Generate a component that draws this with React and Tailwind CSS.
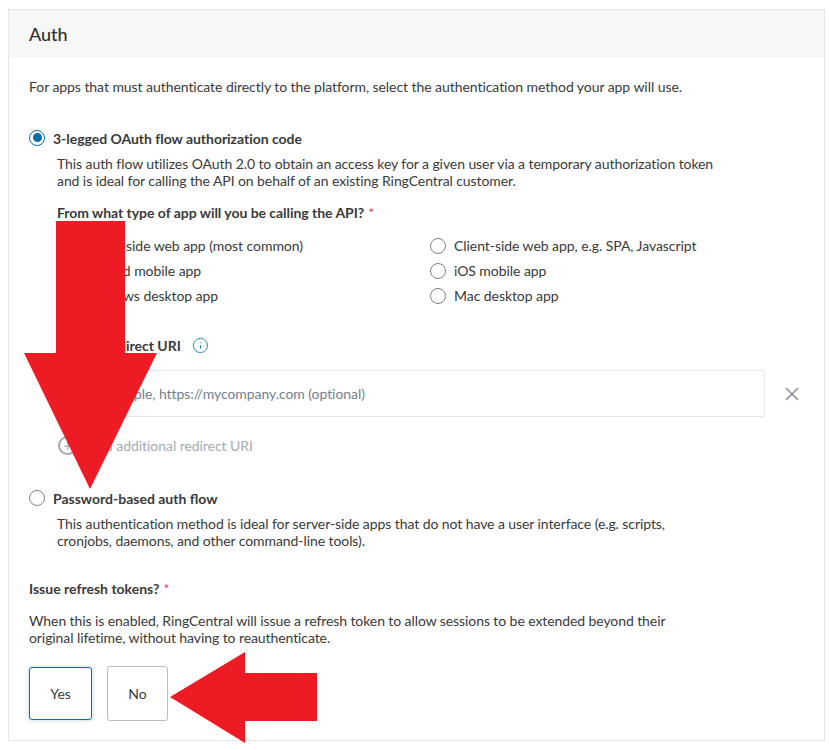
import { X, Info, Plus } from 'lucide-react'

const APP_TYPES = [
  { label: 'Server-side web app (most common)' },
  { label: 'Client-side web app, e.g. SPA, Javascript' },
  { label: 'Android mobile app' },
  { label: 'iOS mobile app' },
  { label: 'Windows desktop app' },
  { label: 'Mac desktop app' },
]

function Radio({ checked }) {
  return (
    <span
      className={`w-[16px] h-[16px] rounded-full flex items-center justify-center shrink-0 bg-white ${
        checked ? 'border-[1.5px] border-[#0b6ea8]' : 'border border-[#808080]'
      }`}
    >
      {checked && <span className="w-[9px] h-[9px] rounded-full bg-[#0b6ea8]" />}
    </span>
  )
}

function Required() {
  return <span className="text-[#d9455f] font-normal ml-1">*</span>
}

export default function App() {
  return (
    <div className="relative w-[829px] h-[750px] overflow-hidden bg-white font-['Lato',sans-serif] text-[14px] tracking-[-0.06px] text-[#3a3a3a]">
      <div className="ml-2 mt-[9px] w-[817px] h-[732px] border border-[#e6e6e6]">
        <div className="h-[48px] bg-[#f7f7f7] flex items-center px-5 text-[18px] font-medium text-[#2f2f2f]">
          Auth
        </div>

        <div className="px-5">
          <p className="mt-[20px] leading-[17px]">
            For apps that must authenticate directly to the platform, select the authentication method your app will use.
          </p>

          <div className="mt-[34px] flex items-center gap-[8px] h-[17px] font-bold tracking-[-0.03px]">
            <Radio checked />
            <span className="pt-px">3-legged OAuth flow authorization code</span>
          </div>

          <div className="ml-7">
            <p className="mt-[9px] leading-[17px] w-[680px] tracking-[-0.08px]">
              This auth flow utilizes OAuth 2.0 to obtain an access key for a given user via a temporary authorization token
              and is ideal for calling the API on behalf of an existing RingCentral customer.
            </p>

            <div className="mt-[15px] h-[17px] leading-[17px] font-bold tracking-[-0.04px]">
              From what type of app will you be calling the API?
              <Required />
            </div>

            <div className="mt-[16px] grid grid-cols-[372px_372px] gap-y-2">
              {APP_TYPES.map((t) => (
                <div key={t.label} className="flex items-center gap-[8px] h-[17px]">
                  <span className="pl-px">
                    <Radio />
                  </span>
                  <span>{t.label}</span>
                </div>
              ))}
            </div>

            <div className="mt-[33px] flex items-center h-[17px] font-bold tracking-normal">
              OAuth Redirect URI
              <Info className="w-[17px] h-[17px] ml-[11px] text-[#2f86c1]" strokeWidth={1.4} />
            </div>

            <div className="mt-[16px] flex items-center">
              <div className="w-[708px] h-[47px] border border-[#e6e6e6] rounded-[2px] flex items-center px-[20px] text-[#75808c]">
                For example, https://mycompany.com (optional)
              </div>
              <X className="w-[22px] h-[22px] ml-4 text-[#8a939c]" strokeWidth={1.75} />
            </div>

            <div className="mt-[20px] flex items-center gap-[11px] h-[17px] text-[#a5abb1]">
              <span className="ml-px w-[19px] h-[19px] rounded-full border-2 border-[#a5abb1] flex items-center justify-center">
                <Plus className="w-3 h-3" strokeWidth={2.5} />
              </span>
              <span>Add additional redirect URI</span>
            </div>
          </div>

          <div className="mt-[35px] flex items-center gap-[8px] h-[17px] font-bold tracking-normal">
            <Radio />
            <span className="pt-px">Password-based auth flow</span>
          </div>

          <p className="ml-7 mt-[9px] leading-[17px] w-[640px] tracking-[-0.08px]">
            This authentication method is ideal for server-side apps that do not have a user interface (e.g. scripts,
            cronjobs, daemons, and other command-line tools).
          </p>

          <div className="mt-[31px] h-[17px] leading-[17px] font-bold tracking-normal">
            Issue refresh tokens?
            <Required />
          </div>

          <p className="mt-[15px] leading-[17px] w-[650px] tracking-[-0.085px]">
            When this is enabled, RingCentral will issue a refresh token to allow sessions to be extended beyond their
            original lifetime, without having to reauthenticate.
          </p>

          <div className="mt-[20px] flex items-center gap-[15px]">
            <button className="w-[63px] h-[53px] rounded-[3px] border border-[#0b6ea8] shadow-[0_0_4px_rgba(11,110,168,0.3)] bg-white">
              Yes
            </button>
            <button className="w-[61px] h-[55px] rounded-[3px] border border-[#bdbdbd] bg-white">No</button>
          </div>
        </div>
      </div>

      {/* annotation arrows drawn over the page */}
      <svg className="absolute left-0 top-0 pointer-events-none" width="829" height="750">
        <polygon fill="#ed1c24" points="56,221 125,221 125,353 157,353 90,489 24,353 56,353" />
        <polygon fill="#ed1c24" points="170,697 245,652 245,673 317,673 317,721 245,721 245,743" />
      </svg>
    </div>
  )
}
